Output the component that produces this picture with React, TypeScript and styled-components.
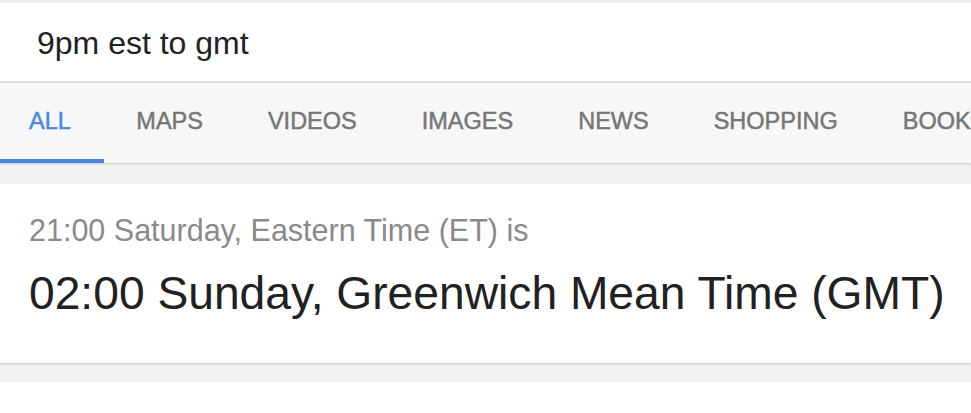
import React from 'react'
import styled, { createGlobalStyle } from 'styled-components'

const GlobalStyle = createGlobalStyle`
  html, body {
    margin: 0;
    padding: 0;
    background: #ffffff;
  }
  body {
    font-family: "Liberation Sans", Arial, Helvetica, sans-serif;
    -webkit-font-smoothing: antialiased;
  }
`

const Page = styled.div`
  width: 971px;
  overflow: hidden;
  background: #ffffff;
`

const TopStrip = styled.div`
  height: 3px;
  background: #eeeeee;
`

const SearchBar = styled.div`
  height: 80px;
  box-sizing: border-box;
  padding: 20px 0 0 37px;
  background: #ffffff;
  border-bottom: 2px solid #dedede;
  font-size: 32px;
  line-height: 40px;
  color: #212121;
`

const TabBar = styled.nav`
  display: flex;
  height: 80px;
  background: #f7f7f7;
  white-space: nowrap;
  overflow: hidden;
  box-shadow: 0 1px 2px rgba(0, 0, 0, 0.18);
  position: relative;
  z-index: 1;
`

const Tab = styled.div<{ $active?: boolean }>`
  flex: none;
  box-sizing: border-box;
  height: 80px;
  padding: 23px 32.5px 0;
  border-bottom: 4px solid ${(p) => (p.$active ? '#4a87e0' : 'transparent')};
  font-size: 23.5px;
  line-height: 30px;
  color: ${(p) => (p.$active ? '#4a87e0' : '#757575')};
  -webkit-text-stroke: 0.45px currentColor;

  &:first-child {
    padding-left: 29px;
    padding-right: 33px;
  }
`

const Results = styled.div`
  background: #f1f1f1;
  padding: 21px 0 19px;
`

const Card = styled.section`
  background: #ffffff;
  padding: 28px 0 42px 29px;
  box-shadow: 0 1px 2px rgba(0, 0, 0, 0.2);
`

const FromTime = styled.div`
  font-size: 30.5px;
  line-height: 36px;
  color: #8a8a8a;
`

const ToTime = styled.div`
  margin-top: 17px;
  font-size: 46.2px;
  line-height: 56px;
  color: #212121;
  white-space: nowrap;
`

const Footer = styled.div`
  height: 40px;
  background: #ffffff;
`

const tabs = ['ALL', 'MAPS', 'VIDEOS', 'IMAGES', 'NEWS', 'SHOPPING', 'BOOKS']

export default function App() {
  return (
    <Page>
      <GlobalStyle />
      <TopStrip />
      <SearchBar>9pm est to gmt</SearchBar>
      <TabBar>
        {tabs.map((t, i) => (
          <Tab key={t} $active={i === 0}>
            {t}
          </Tab>
        ))}
      </TabBar>
      <Results>
        <Card>
          <FromTime>21:00 Saturday, Eastern Time (ET) is</FromTime>
          <ToTime>02:00 Sunday, Greenwich Mean Time (GMT)</ToTime>
        </Card>
      </Results>
      <Footer />
    </Page>
  )
}
